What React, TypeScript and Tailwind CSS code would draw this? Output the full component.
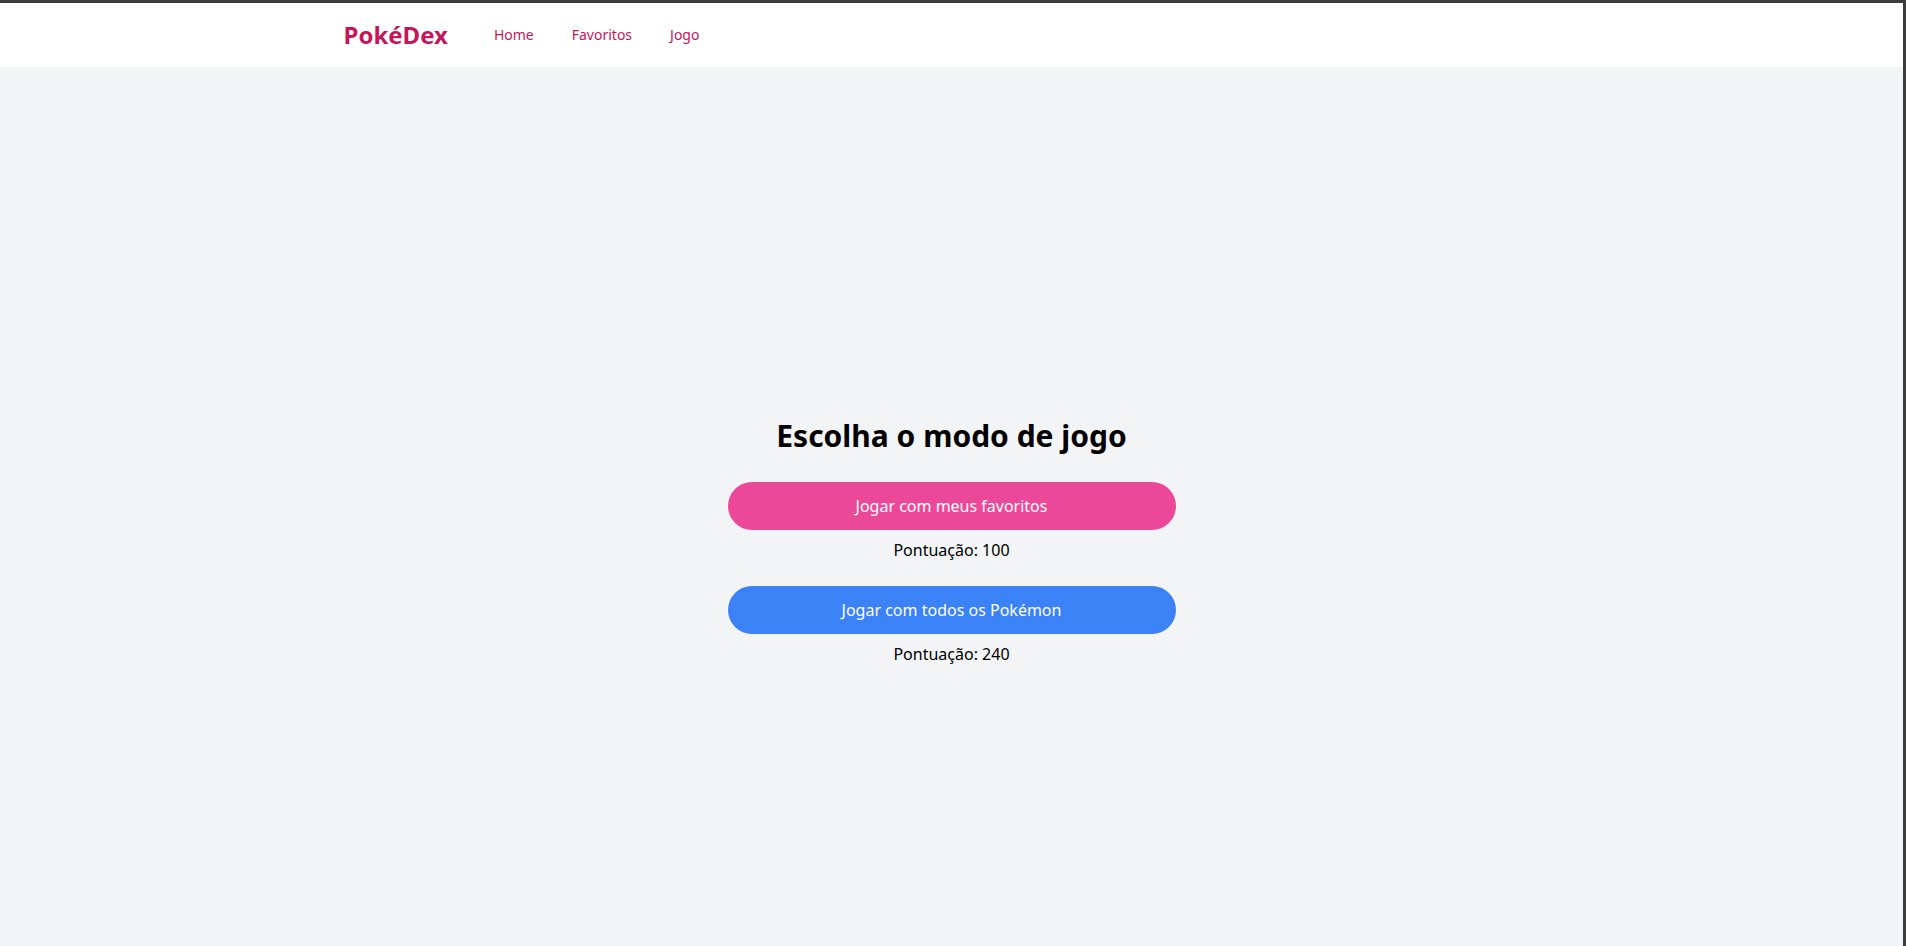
const links = ["Home", "Favoritos", "Jogo"];

const Navbar = () => (
  <nav className="bg-white">
    <div className="mx-auto flex h-16 max-w-7xl items-center px-8">
      <a href="#" className="text-2xl font-bold text-[#c2185b]">
        PokéDex
      </a>
      <div className="ml-[46px] flex items-center gap-[38px]">
        {links.map((l) => (
          <a key={l} href="#" className="text-sm text-[#c2185b]">
            {l}
          </a>
        ))}
      </div>
    </div>
  </nav>
);

const modes = [
  { label: "Jogar com meus favoritos", score: 100, color: "bg-[#ec4899]" },
  { label: "Jogar com todos os Pokémon", score: 240, color: "bg-[#3b82f6]" },
];

export default function App() {
  return (
    <div
      className="border-t-[3px] border-r-[3px] border-[#3c3c3c] bg-[#f3f4f6] text-black"
      style={{ fontFamily: '"Noto Sans", "Open Sans", sans-serif' }}
    >
      <Navbar />
      <main className="flex min-h-screen flex-col items-center justify-center pt-1">
        <h2 className="mb-7 text-3xl font-bold">Escolha o modo de jogo</h2>
        <div className="flex w-full max-w-md flex-col gap-6">
          {modes.map((m) => (
            <div key={m.label} className="flex flex-col items-center">
              <button className={`h-12 w-full rounded-full text-base text-white ${m.color}`}>
                {m.label}
              </button>
              <p className="mt-2 text-base">Pontuação: {m.score}</p>
            </div>
          ))}
        </div>
      </main>
    </div>
  );
}
